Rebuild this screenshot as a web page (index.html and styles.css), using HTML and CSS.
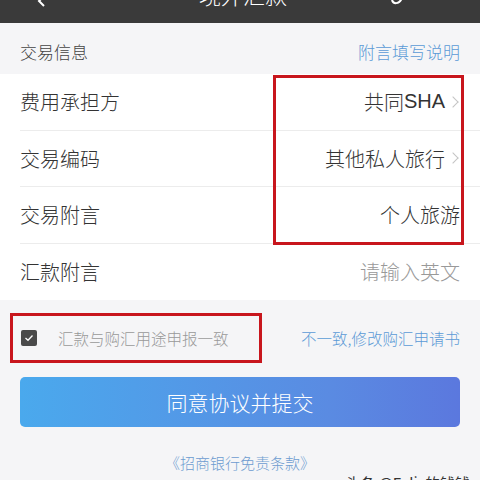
FILE: index.html
```html
<!DOCTYPE html>
<html lang="zh">
<head>
<meta charset="utf-8">
<link rel="stylesheet" href="styles.css">
</head>
<body>
<div class="page">
  <header class="topbar">
    <svg class="back" width="14" height="8" viewBox="0 0 14 8"><path d="M10 -6 L3 1 L8 6" fill="none" stroke="#fff" stroke-width="2"/></svg>
    <span class="title">境外汇款</span>
    <svg class="help" width="16" height="8" viewBox="0 0 16 8"><path d="M2 0 C3 4 9 5 12 -2" fill="none" stroke="#fff" stroke-width="2"/></svg>
  </header>

  <div class="section-head">
    <span class="section-title">交易信息</span>
    <span class="link">附言填写说明</span>
  </div>

  <div class="list">
    <div class="highlight">
      <div class="row">
        <span class="label">费用承担方</span>
        <span class="value">共同<span class="latin">SHA</span><i class="chev"></i></span>
      </div>
      <div class="row">
        <span class="label">交易编码</span>
        <span class="value">其他私人旅行<i class="chev"></i></span>
      </div>
      <div class="row">
        <span class="label">交易附言</span>
        <span class="value">个人旅游</span>
      </div>
    </div>
    <div class="row last">
      <span class="label">汇款附言</span>
      <span class="value placeholder">请输入英文</span>
    </div>
  </div>

  <div class="check-row">
    <div class="check-box-outline">
      <span class="checkbox">
        <svg width="10" height="8" viewBox="0 0 10 8"><path d="M1.5 4 L4 6.3 L8.5 1.5" fill="none" stroke="#fff" stroke-width="1.3"/></svg>
      </span>
      <span class="check-text">汇款与购汇用途申报一致</span>
    </div>
    <span class="link small">不一致,修改购汇申请书</span>
  </div>

  <div class="btn-wrap">
    <button class="submit">同意协议并提交</button>
  </div>

  <div class="terms">《招商银行免责条款》</div>
  <div class="watermark">头条 @Felix的钱钱</div>
</div>
</body>
</html>
```

FILE: styles.css
```css
* { box-sizing: border-box; margin: 0; padding: 0; }
html, body { width: 480px; height: 480px; overflow: hidden; }
body {
  background: #f5f5f7;
  font-family: "Noto Sans CJK SC", "Noto Sans", sans-serif;
  font-weight: 300;
  color: #333;
}
.page { width: 480px; height: 480px; overflow: hidden; }

.topbar {
  height: 23px;
  background: #3a3a3a;
  display: flex;
  align-items: flex-start;
  overflow: hidden;
  padding-left: 36px;
  padding-right: 74px;
}
.back { flex: none; }
.title {
  flex: 1;
  text-align: center;
  color: #fff;
  font-size: 22px;
  line-height: 22px;
  margin-top: -17px;
  padding-left: 46px;
}
.help { flex: none; }

.section-head {
  height: 51px;
  display: flex;
  align-items: center;
  justify-content: space-between;
  padding: 5px 20px 0 20px;
}
.section-title { font-size: 17px; color: #444; }
.link { color: #5b9ad6; font-size: 17px; }
.link.small { font-size: 15.5px; }

.list {
  background: #fff;
}
.highlight {
  position: relative;
}
.highlight::after {
  content: "";
  position: absolute;
  left: 273px;
  right: 16px;
  top: 1px;
  bottom: -1px;
  border: 3px solid #c8161d;
  pointer-events: none;
}
.row {
  height: 56.5px;
  display: flex;
  align-items: center;
  justify-content: space-between;
  margin-left: 20px;
  padding-right: 20px;
  border-bottom: 1px solid #ececec;
}
.row.last { border-bottom: none; }
.label { font-size: 20px; color: #333; }
.value { font-size: 20px; color: #333; display: flex; align-items: center; }
.latin { font-family: "Liberation Sans", "Noto Sans CJK SC", sans-serif; font-weight: 400; }
.value.placeholder { color: #999; }
.chev {
  display: inline-block;
  width: 8px; height: 8px;
  border-top: 1.3px solid #c4c4c4;
  border-right: 1.3px solid #c4c4c4;
  transform: rotate(45deg);
  margin-left: 4px;
  margin-right: 3px;
}

.check-row {
  height: 76px;
  display: flex;
  align-items: center;
  justify-content: space-between;
  padding: 0 20px 0 10px;
}
.check-box-outline {
  width: 252px;
  height: 50px;
  border: 3px solid #c8161d;
  display: flex;
  align-items: center;
  padding-left: 8px;
}
.checkbox {
  width: 16px; height: 16px;
  background: #4a4a4a;
  border-radius: 2px;
  display: flex;
  align-items: center;
  justify-content: center;
}
.check-text {
  margin-left: 21px;
  font-size: 15.5px;
  color: #999;
}

.btn-wrap { padding: 1px 20px 0 20px; }
.submit {
  width: 100%;
  height: 50px;
  border: none;
  border-radius: 5px;
  background: linear-gradient(90deg, #4aa9ed 0%, #5a8be2 70%, #5b78de 100%);
  color: #fff;
  font-family: "Noto Sans CJK SC", "Noto Sans", sans-serif;
  font-weight: 300;
  font-size: 21px;
}

.terms {
  margin-top: 25px;
  text-align: center;
  font-size: 15px;
  color: #6d9cd0;
}
.watermark {
  text-align: right;
  padding-right: 10px;
  margin-top: 0px;
  font-size: 15px;
  font-weight: 400;
  line-height: 20px;
  color: #333;
}
```
